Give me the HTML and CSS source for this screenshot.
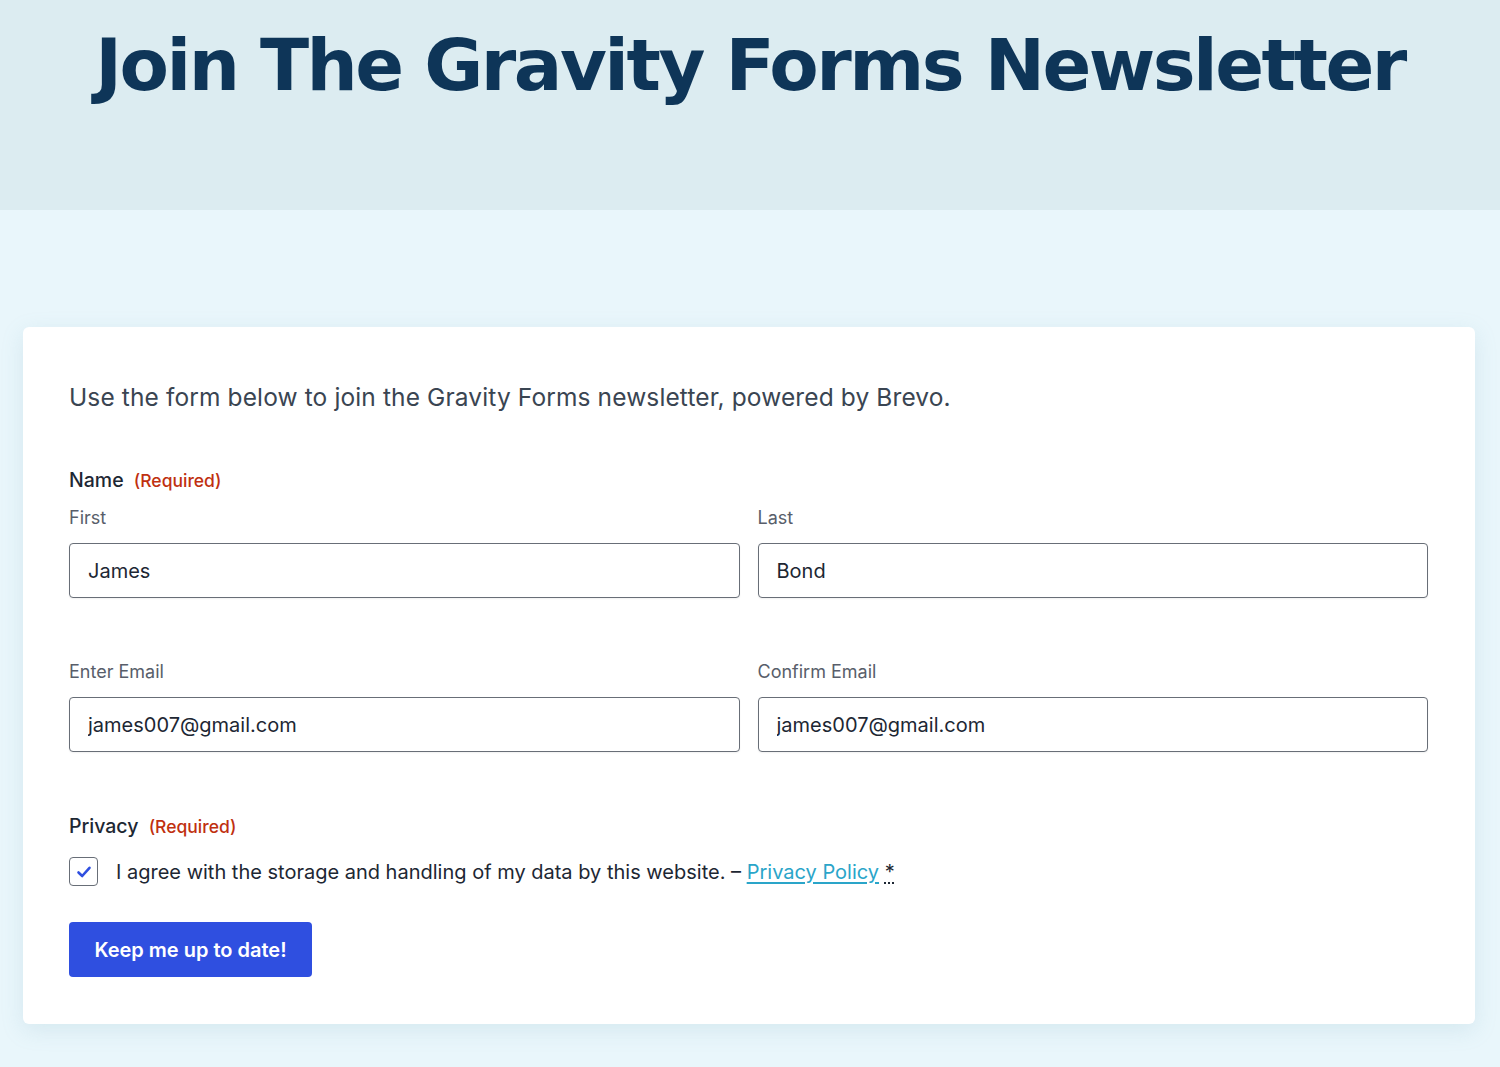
FILE: index.html
```html
<!DOCTYPE html>
<html lang="en">
<head>
<meta charset="utf-8">
<title>Join The Gravity Forms Newsletter</title>
<link rel="stylesheet" href="styles.css">
</head>
<body>
<header class="hero">
  <h1 class="hero-title">Join The Gravity Forms Newsletter</h1>
</header>
<main class="page">
  <section class="card">
    <p class="intro">Use the form below to join the Gravity Forms newsletter, powered by Brevo.</p>
    <form class="form">
      <fieldset class="field">
        <legend class="field-label">Name <span class="req">(Required)</span></legend>
        <div class="cols">
          <label class="sub">
            <span class="sub-label">First</span>
            <input class="input" type="text" value="James">
          </label>
          <label class="sub">
            <span class="sub-label">Last</span>
            <input class="input" type="text" value="Bond">
          </label>
        </div>
      </fieldset>
      <div class="field field-email">
        <div class="cols">
          <label class="sub">
            <span class="sub-label">Enter Email</span>
            <input class="input" type="text" value="james007@gmail.com">
          </label>
          <label class="sub">
            <span class="sub-label">Confirm Email</span>
            <input class="input" type="text" value="james007@gmail.com">
          </label>
        </div>
      </div>
      <fieldset class="field field-privacy">
        <legend class="field-label">Privacy <span class="req">(Required)</span></legend>
        <label class="consent">
          <span class="checkbox">
            <svg width="18" height="18" viewBox="0 0 18 18"><path d="M3.5 9.5 L7.2 13 L14.5 4.8" fill="none" stroke="#2f4fe0" stroke-width="2.6" stroke-linecap="round" stroke-linejoin="round"/></svg>
          </span>
          <span class="consent-text">I agree with the storage and handling of my data by this website. – <a class="link" href="#">Privacy Policy</a> <abbr class="star" title="required">*</abbr></span>
        </label>
      </fieldset>
      <button class="btn" type="button">Keep me up to date!</button>
    </form>
  </section>
</main>
</body>
</html>
```
FILE: styles.css
```css
* { box-sizing: border-box; }
html, body { margin: 0; padding: 0; }
body {
  background: #e9f6fb;
  font-family: Inter, "Noto Sans", "Liberation Sans", sans-serif;
  color: #1d2733;
  height: 1067px;
  overflow: hidden;
}
.hero {
  background: #dcecf1;
  height: 210px;
  padding-top: 23px;
}
.hero-title {
  margin: 0;
  text-align: center;
  font-family: "DejaVu Sans", "Noto Sans", sans-serif;
  font-weight: 700;
  font-size: 72px;
  line-height: 84px;
  letter-spacing: -2.5px;
  color: #0e3558;
}
.page {
  padding: 117px 25px 0 23px;
}
.card {
  background: #fff;
  border-radius: 6px;
  box-shadow: 0 6px 22px rgba(120, 170, 190, 0.18);
  padding: 52px 47px 46px 46px;
  height: 697px;
}
.intro {
  margin: 0 0 52px;
  font-size: 24.5px;
  line-height: 36px;
  letter-spacing: 0.12px;
  color: #3a4552;
}
.form { margin: 0; }
.field {
  border: 0;
  margin: 0;
  padding: 0;
  min-width: 0;
}
.field-label {
  padding: 0;
  font-size: 19.5px;
  line-height: 26px;
  font-weight: 500;
  color: #1d2733;
  margin-bottom: 12px;
}
.req {
  font-size: 17.5px;
  color: #c0300f;
  font-weight: 500;
  margin-left: 5px;
}
.cols {
  display: grid;
  grid-template-columns: 1fr 1fr;
  gap: 18px;
}
.sub {
  display: flex;
  flex-direction: column;
}
.sub-label {
  font-size: 18px;
  line-height: 24px;
  color: #585e6a;
  margin-bottom: 13px;
}
.input {
  height: 55px;
  border: 1px solid #686e77;
  border-radius: 4px;
  padding: 0 18px;
  font-family: inherit;
  font-size: 20px;
  color: #1d2733;
  background: #fff;
  box-shadow: 0 1px 2px rgba(0,0,0,0.06);
}
.field-email { margin-top: 62px; }
.field-privacy { margin-top: 61px; }
.field-privacy .field-label { margin-bottom: 17px; }
.consent {
  display: flex;
  align-items: center;
  gap: 18px;
}
.checkbox {
  width: 29px;
  height: 29px;
  border: 1px solid #686e77;
  border-radius: 4px;
  display: flex;
  align-items: center;
  justify-content: center;
  flex: none;
}
.consent-text {
  font-size: 20px;
  line-height: 28px;
  color: #1d2733;
}
.link {
  color: #2aa5c9;
  text-decoration: underline;
  text-underline-offset: 3px;
}
.star {
  text-decoration: underline dotted;
  text-underline-offset: 4px;
}
.btn {
  margin-top: 36px;
  height: 55px;
  width: 243px;
  border: 0;
  border-radius: 4px;
  background: #2f4fe0;
  color: #fff;
  font-family: inherit;
  font-size: 20px;
  font-weight: 600;
}
```
